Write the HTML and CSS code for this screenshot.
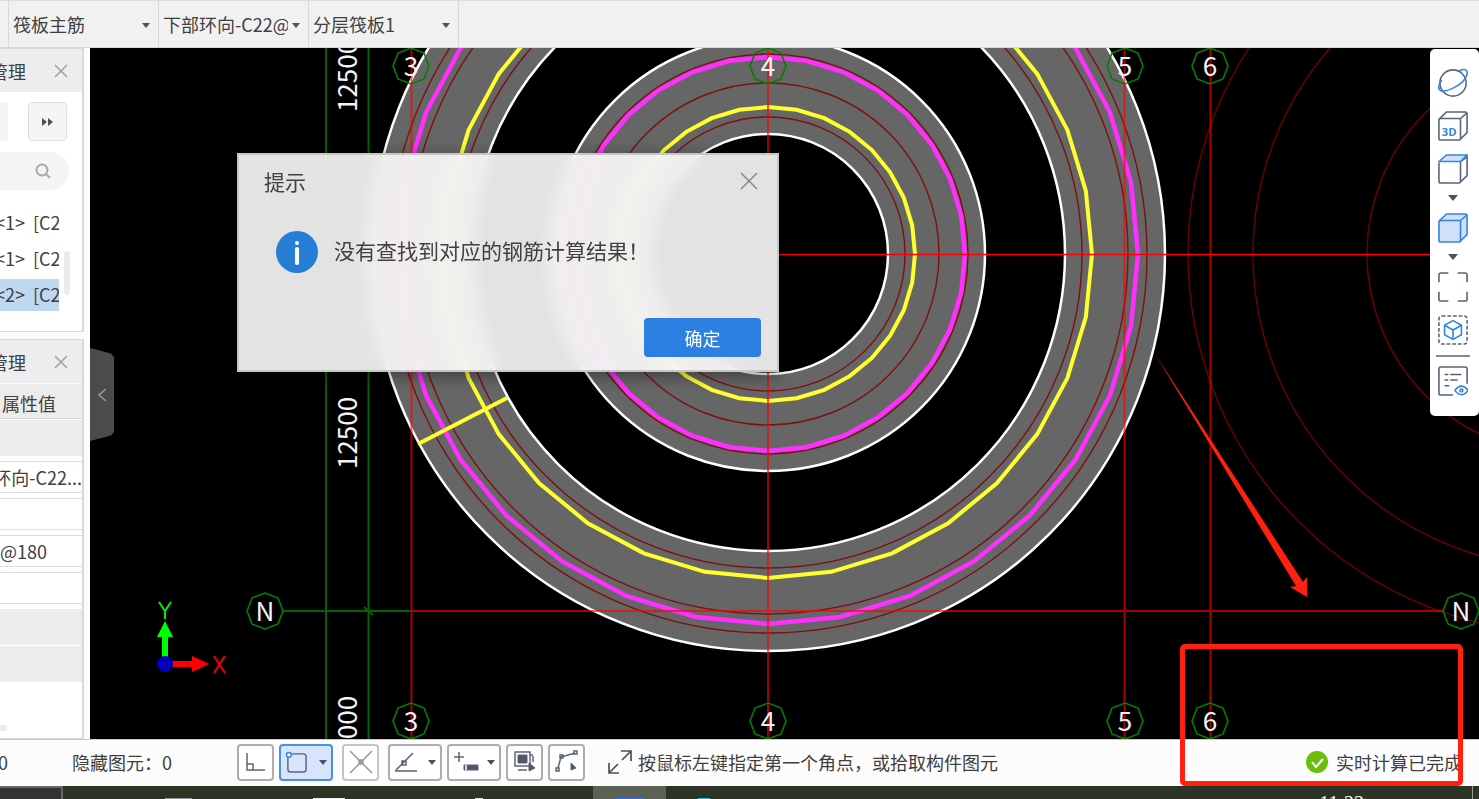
FILE: index.html
```html
<!DOCTYPE html>
<html lang="zh-CN">
<head>
    <meta charset="UTF-8">
    <meta name="viewport" content="width=device-width, initial-scale=1.0">
    <title>筏板主筋</title>
    <link rel="stylesheet" href="styles.css">
</head>
<body>
    <header class="topbar">
        <div class="picker-stub"></div>
        <div class="picker">
            <select aria-label="构件类型"><option>筏板主筋</option></select>
        </div>
        <div class="picker">
            <select aria-label="构件"><option>下部环向-C22@</option></select>
        </div>
        <div class="picker">
            <select aria-label="分层"><option>分层筏板1</option></select>
        </div>
    </header>

    <main class="workspace">
        <aside class="sidebar">
            <section class="panel">
                <div class="panel-head">
                    <span>管理</span>
                    <button class="close" aria-label="关闭"><svg width="14" height="14" viewBox="0 0 14 14"><path d="M1 1l12 12M13 1L1 13"/></svg></button>
                </div>
                <div class="panel-tools">
                    <span class="tool-stub"></span>
                    <button class="more" aria-label="更多"><svg width="12" height="8" viewBox="0 0 12 8"><path d="M0 0l5 4-5 4zM6 0l5 4-5 4z"/></svg></button>
                </div>
                <div class="search">
                    <input type="text" aria-label="搜索">
                    <svg width="16" height="16" viewBox="0 0 16 16"><circle cx="7" cy="7" r="5.5"/><path d="M11 11l4 4"/></svg>
                </div>
                <div class="tree">
                    <ul>
                        <li>&lt;1&gt;&nbsp; [C2</li>
                        <li>&lt;1&gt;&nbsp; [C2</li>
                        <li class="selected">&lt;2&gt;&nbsp; [C2</li>
                    </ul>
                    <span class="tree-scroll"></span>
                </div>
            </section>
            <section class="panel props">
                <div class="panel-head">
                    <span>管理</span>
                    <button class="close" aria-label="关闭"><svg width="14" height="14" viewBox="0 0 14 14"><path d="M1 1l12 12M13 1L1 13"/></svg></button>
                </div>
                <div class="prop-group name">属性值</div>
                <div class="prop-group"></div>
                <div class="prop long">环向-C22...</div>
                <div class="prop"></div>
                <div class="prop value">@180</div>
                <div class="prop"></div>
                <div class="prop-group"></div>
                <div class="prop-group"></div>
                <span class="props-scroll"></span>
            </section>
        </aside>

        <section class="canvas">
            <svg class="drawing" viewBox="90 48 1389 691" preserveAspectRatio="xMidYMid slice">
                <defs>
                    <!-- 32 段折线圆 -->
                    <polygon id="ring" vector-effect="non-scaling-stroke" points="1000,0 981,195 924,383 831,556 707,707 556,831 383,924 195,981 0,1000 -195,981 -383,924 -556,831 -707,707 -831,556 -924,383 -981,195 -1000,0 -981,-195 -924,-383 -831,-556 -707,-707 -556,-831 -383,-924 -195,-981 0,-1000 195,-981 383,-924 556,-831 707,-707 831,-556 924,-383 981,-195"/>
                    <polygon id="bubble" points="0,-18 13,-13 18,0 13,13 0,18 -13,13 -18,0 -13,-13"/>
                </defs>

                <!-- 筏板 -->
                <g transform="translate(768 254)">
                    <circle class="slab" r="347" stroke-width="100"/>
                    <circle class="slab" r="168" stroke-width="97"/>
                    <g class="edge">
                        <circle r="397"/><circle r="297"/><circle r="217"/><circle r="120"/>
                    </g>
                    <g class="guide">
                        <circle r="379"/><circle r="360"/><circle r="314"/>
                        <circle r="200"/><circle r="171"/><circle r="137"/>
                    </g>
                    <use class="bar-pink" href="#ring" transform="scale(.37)"/>
                    <use class="bar-yellow" href="#ring" transform="scale(.324)"/>
                    <use class="bar-pink" href="#ring" transform="scale(.197)"/>
                    <use class="bar-yellow" href="#ring" transform="scale(.147)"/>
                    <path class="bar-yellow" d="M-350 190L-261 144"/>
                </g>
                <g class="guide far" transform="translate(1567 254)">
                    <circle r="379"/><circle r="314"/><circle r="200"/>
                </g>

                <!-- 轴网 -->
                <path class="dim" d="M326 48V739M368.500 48V739M283 611H411M364 607l9 8"/>
                <path class="axis" d="M411.500 48V739M768 48V739M1124.500 48V739M1210.500 48V739M411 611H1444"/>
                <path class="axis bright" d="M768 254.500H1479"/>
                <g class="marks">
                    <use href="#bubble" x="411" y="66"/><use href="#bubble" x="768" y="66"/>
                    <use href="#bubble" x="1125" y="66"/><use href="#bubble" x="1210" y="66"/>
                    <use href="#bubble" x="411" y="721"/><use href="#bubble" x="768" y="721"/>
                    <use href="#bubble" x="1125" y="721"/><use href="#bubble" x="1210" y="721"/>
                    <use href="#bubble" x="265" y="611"/><use href="#bubble" x="1461" y="611"/>
                </g>
                <g class="labels">
                    <text x="411" y="76">3</text><text x="768" y="76">4</text>
                    <text x="1125" y="76">5</text><text x="1210" y="76">6</text>
                    <text x="411" y="731">3</text><text x="768" y="731">4</text>
                    <text x="1125" y="731">5</text><text x="1210" y="731">6</text>
                    <text x="265" y="621">N</text><text x="1461" y="621">N</text>
                    <text transform="translate(357 76) rotate(-90)">12500</text>
                    <text transform="translate(357 433) rotate(-90)">12500</text>
                    <text transform="translate(357 732) rotate(-90)">12000</text>
                </g>

                <!-- 坐标系 -->
                <path fill="#0f0" d="M162 657V637h-5l8-16 8 16h-5v20z"/>
                <path fill="#f00" d="M172 661h20v-5l17 8-17 8v-5h-20z"/>
                <circle cx="165" cy="664" r="8" fill="#00b"/>
                <path class="ucs-y" d="M159 602l6 9 6-9M165 611v8"/>
                <path class="ucs-x" d="M214 656l11 17M225 656l-11 17"/>

                <path fill="#ff2010" d="M1155 354L1303 582l4-5v20l-17-10 6-1z"/>
            </svg>

            <button class="collapse" aria-label="收起"><svg width="9" height="14" viewBox="0 0 9 14"><path d="M8 1L1 7l7 6"/></svg></button>

            <nav class="viewbar">
                <button aria-label="动态观察"><svg class="ico" viewBox="0 0 32 32"><circle cx="16" cy="16" r="14"/><path class="blue" d="M23 3c6-3 9-1 8 4-2 7-9 12-16 15-7 3-13 4-14 0-1-3 1-6 3-9"/></svg></button>
                <button aria-label="三维"><svg class="ico" viewBox="0 0 32 32"><path d="M1 9v20q0 2 2 2h20l8-8V3q0-2-2-2H9zM1 8h22q1 0 1 1v22M24 8l7-6"/><text x="4" y="27">3D</text></svg></button>
                <button aria-label="俯视"><svg class="ico" viewBox="0 0 32 32"><path d="M1 9v20q0 2 2 2h20l8-8V3L24 8v22"/><path class="blue tint" d="M1 8L9 1h22l-7 7z"/></svg></button>
                <svg class="down" viewBox="0 0 10 8"><path d="M0 1h10L5 7z"/></svg>
                <button aria-label="实体"><svg class="ico" viewBox="0 0 32 32"><path class="blue tint" d="M1 9v20q0 2 2 2h20l8-8V3q0-2-2-2H9z"/><path class="blue" d="M1 8h22q1 0 1 1v22M24 8l7-6"/></svg></button>
                <svg class="down" viewBox="0 0 10 8"><path d="M0 1h10L5 7z"/></svg>
                <button aria-label="全屏"><svg class="ico" viewBox="0 0 32 32"><path d="M1 11V3q0-2 2-2h8M21 1h8q2 0 2 2v8M31 21v8q0 2-2 2h-8M11 31H3q-2 0-2-2v-8"/></svg></button>
                <button aria-label="局部三维"><svg class="ico" viewBox="0 0 32 32"><rect x="1" y="1" width="30" height="30" rx="3" stroke-dasharray="4 2"/><path class="blue" d="M16 6l9 5v10l-9 5-9-5V11zM7 11l9 5 9-5M16 16v10"/></svg></button>
                <hr>
                <button aria-label="显示设置"><svg class="ico" viewBox="0 0 32 32"><path d="M16 31H3q-2 0-2-2V3q0-2 2-2h26q2 0 2 2v16M7 9h4M13 9h12M7 15h4M13 15h8M7 21h5"/><path class="blue" d="M18 26q7-9 14 0-7 9-14 0z"/><circle class="blue" cx="25" cy="26" r="1.500"/></svg></button>
            </nav>
        </section>
    </main>

    <footer class="statusbar">
        <span class="count-left">0</span>
        <span class="hidden-count">隐藏图元：0</span>
        <div class="snap">
            <button aria-label="正交"><svg width="20" height="20" viewBox="0 0 20 20"><path d="M1 1v17h18M1 12h6v6"/></svg></button>
            <button class="wide active" aria-label="矩形"><svg width="23" height="23" viewBox="0 0 24 24"><rect x="3" y="3" width="19" height="19" rx="3"/><circle class="pin" cx="4" cy="4" r="2.500"/></svg><i></i></button>
        </div>
        <div class="snap">
            <button class="off" aria-label="交点"><svg width="24" height="24" viewBox="0 0 24 24"><path d="M1 1l22 22M23 1L1 23M10 10h4v4h-4z"/></svg></button>
        </div>
        <div class="snap">
            <button class="wide" aria-label="角度"><svg width="24" height="22" viewBox="0 0 24 22"><path d="M1 20h22M2 19L19 2M8 10h4v4H8z"/></svg><i></i></button>
            <button class="wide" aria-label="动态输入"><svg width="26" height="22" viewBox="0 0 26 22"><path d="M1 6h10M6 1v10"/><path class="solid" d="M11 14h14v5H11z"/><path class="cursor" d="M13 14v5"/></svg><i></i></button>
            <button aria-label="选择"><svg width="24" height="24" viewBox="0 0 24 24"><path d="M2 2h15v14H2zM5 20h9M20 6v6M17 5h3"/><path class="solid" d="M5 5h9v8H5zM16 13l6 5-6 3z"/></svg></button>
            <button aria-label="折线"><svg width="24" height="24" viewBox="0 0 24 24"><path d="M3 18L6 7l14-4M1 18h3v3H1zM5 5h3v3H5zM19 1h3v3h-3z"/><path class="solid" d="M16 13l5 5-5 2z"/></svg></button>
        </div>
        <svg class="tip-icon" width="24" height="24" viewBox="0 0 24 24"><path d="M14 10l9-9M13 1h10v10M10 14l-9 9M1 13v10h10"/></svg>
        <span class="tip">按鼠标左键指定第一个角点，或拾取构件图元</span>
        <svg class="done-icon" width="22" height="22" viewBox="0 0 22 22"><circle cx="11" cy="11" r="11"/><path d="M6 11l4 5 7-8"/></svg>
        <span class="done">实时计算已完成</span>
    </footer>

    <div class="taskbar">
        <span class="start"></span>
        <span class="app grey"></span>
        <span class="app white"></span>
        <span class="app dot"></span>
        <span class="app current"></span>
        <span class="app cyan"></span>
        <time class="clock">11:22</time>
        <span class="desktop"></span>
    </div>

    <div class="dialog" role="dialog" aria-labelledby="dialog-title">
        <div class="dialog-head">
            <h1 id="dialog-title">提示</h1>
            <button class="close" aria-label="关闭"><svg width="18" height="18" viewBox="0 0 18 18"><path d="M1 1l16 16M17 1L1 17"/></svg></button>
        </div>
        <div class="dialog-body">
            <svg width="42" height="42" viewBox="0 0 42 42"><circle cx="21" cy="21" r="21" fill="#267dd6"/><circle cx="21" cy="12" r="2" fill="#fff"/><path d="M21 18v14" stroke="#fff" stroke-width="4" stroke-linecap="round"/></svg>
            <p>没有查找到对应的钢筋计算结果！</p>
        </div>
        <button class="ok">确定</button>
    </div>

    <div class="highlight"></div>
</body>
</html>
```
FILE: styles.css
```css
* {
    box-sizing: border-box;
}
body {
    margin: 0;
    height: 100vh;
    display: flex;
    flex-direction: column;
    position: relative;
    overflow: hidden;
    background: #fcfcfc;
    color: #404040;
    font-family: "Noto Sans CJK SC", sans-serif;
    font-size: 18px;
    line-height: 24px;
}
button {
    padding: 0;
    border: 0;
    background: none;
    font: inherit;
    color: inherit;
}
svg {
    display: block;
    flex: none;
}

/* 顶部工具栏 */
.topbar {
    display: flex;
    flex: none;
    height: 48px;
    background: #f1f1f1;
    border-top: 1px solid #dcdcdc;
    border-bottom: 1px solid #d8d8d8;
}
.picker-stub {
    width: 9px;
    border-right: 1px solid #d8d8d8;
}
.picker {
    width: 150px;
    position: relative;
    border-right: 1px solid #d8d8d8;
}
.picker select {
    width: 100%;
    height: 100%;
    padding: 0 20px 0 4px;
    border: 0;
    appearance: none;
    background: none;
    font: inherit;
    color: inherit;
}
.picker::after {
    content: "";
    position: absolute;
    right: 8px;
    top: 22px;
    border: 4px solid transparent;
    border-top: 5px solid #4a5262;
    border-bottom: 0;
}

.workspace {
    flex: 1;
    display: flex;
    min-height: 0;
}

/* 左侧面板 */
.sidebar {
    width: 84px;
    margin-right: 6px;
    flex: none;
    display: flex;
    flex-direction: column;
    gap: 7px;
    overflow: hidden;
}
.panel {
    border: solid #d8d8d8;
    border-width: 1px 2px 1px 0;
    background: #fff;
}
.panel-head {
    display: flex;
    justify-content: flex-end;
    align-items: center;
    gap: 28px;
    height: 43px;
    padding-right: 14px;
    background: #ededef;
}
.panel-head span {
    flex: none;
}
.close svg {
    fill: none;
    stroke: #a0a0a0;
    stroke-width: 1.5;
}
.panel-tools {
    display: flex;
    justify-content: space-between;
    padding: 10px 15px 0 0;
}
.tool-stub {
    width: 8px;
    border-radius: 0 4px 4px 0;
    background: #f4f4f4;
}
.more {
    width: 39px;
    height: 39px;
    display: flex;
    align-items: center;
    justify-content: center;
    border: 1px solid #dde0e2;
    border-radius: 4px;
    background: #f5f5f5;
    fill: #4a5262;
}
.search {
    display: flex;
    align-items: center;
    width: 69px;
    height: 38px;
    margin-top: 11px;
    padding-right: 18px;
    border-radius: 0 19px 19px 0;
    background: #f4f4f4;
}
.search input {
    flex: 1;
    min-width: 0;
    border: 0;
    background: none;
}
.search svg {
    fill: none;
    stroke: #a8a8a8;
    stroke-width: 2;
}
.tree {
    display: flex;
    justify-content: space-between;
    height: 141px;
    padding: 17px 12px 0 0;
}
.tree ul {
    width: 59px;
    margin: 0;
    padding: 0;
    list-style: none;
}
.tree li {
    height: 32px;
    margin-bottom: 4px;
    line-height: 30px;
    overflow: hidden;
    white-space: nowrap;
    text-indent: -5px;
}
.tree .selected {
    background: #bfd8f2;
}
.tree-scroll {
    width: 6px;
    height: 44px;
    margin-top: 44px;
    border-radius: 3px;
    background: #ebebeb;
}
.props {
    flex: 1;
}
.prop-group {
    height: 36px;
    margin-bottom: 1px;
    background: #ececec;
}
.prop-group.name {
    padding-left: 2px;
    border-top: 1px solid #fafafa;
    border-bottom: 1px solid #d8d8d8;
    line-height: 38px;
}
.prop {
    display: flex;
    align-items: center;
    height: 32px;
    margin: 5px 0;
    border: solid #dedede;
    border-width: 1px 0;
    white-space: nowrap;
}
.prop.long {
    justify-content: flex-end;
}
.prop.value {
    justify-content: flex-end;
    padding-right: 35px;
}
.props-scroll {
    display: block;
    width: 7px;
    height: 6px;
    margin-top: 43px;
    border-radius: 0 3px 3px 0;
    background: #ebebeb;
}

/* 绘图区 */
.canvas {
    flex: 1;
    position: relative;
    min-width: 0;
    background: #000;
}
.drawing {
    width: 100%;
    height: 100%;
    fill: none;
}
.slab {
    stroke: #666;
}
.edge {
    stroke: #fff;
    stroke-width: 2.5;
}
.guide {
    stroke: #7d1010;
    stroke-width: 1.4;
}
.guide.far {
    stroke: #6c0000;
}
.bar-pink {
    stroke: #ff30ff;
    stroke-width: 4.5;
}
.bar-yellow {
    stroke: #ffff30;
    stroke-width: 4;
}
.dim {
    stroke: #006400;
    stroke-width: 2;
}
.axis {
    stroke: #f00;
    stroke-width: 2;
    opacity: .65;
}
.axis.bright {
    stroke-width: 1.6;
    opacity: 1;
}
.marks {
    stroke: #008000;
    stroke-width: 1.6;
}
.labels {
    fill: #f4f4f4;
    font-size: 26px;
    text-anchor: middle;
}
.ucs-x {
    stroke: #e00;
    stroke-width: 2;
}
.ucs-y {
    stroke: #0e0;
    stroke-width: 2;
}
.collapse {
    position: absolute;
    left: 0;
    top: 300px;
    width: 24px;
    height: 93px;
    display: flex;
    align-items: center;
    justify-content: center;
    background: #4b4b4b;
    clip-path: polygon(0 0, 88% 6%, 100% 10%, 100% 90%, 88% 94%, 0 100%);
}
.collapse svg {
    fill: none;
    stroke: #999;
    stroke-width: 1.5;
}

/* 视图工具栏 */
.viewbar {
    position: absolute;
    top: 1px;
    right: 0;
    width: 49px;
    padding: 19px 3px 20px 0;
    display: flex;
    flex-direction: column;
    align-items: center;
    gap: 13px;
    border-radius: 5px;
    background: #fff;
}
.viewbar hr {
    width: 34px;
    height: 2px;
    margin: -3px 0 -4px;
    border: 0;
    background: #8a8a8e;
}
.ico {
    width: 30px;
    height: 30px;
    fill: none;
    stroke: #5b6478;
    stroke-width: 1.7;
}
.ico .blue {
    stroke: #3584e4;
}
.ico .tint {
    fill: #cfe0f8;
}
.ico text {
    fill: #3584e4;
    stroke: none;
    font-family: "Open Sans", sans-serif;
    font-size: 12px;
    font-weight: 700;
}
.down {
    width: 10px;
    height: 8px;
    margin: -3px 0 -2px;
    fill: #4a5262;
}

/* 状态栏 */
.statusbar {
    flex: none;
    display: flex;
    align-items: center;
    height: 47px;
    padding: 0 17px 2px 0;
    border-top: 1px solid #c8c8c8;
    white-space: nowrap;
}
.count-left {
    width: 72px;
    text-indent: -2px;
}
.hidden-count {
    width: 165px;
}
.snap {
    display: flex;
    gap: 5px;
    margin-right: 9px;
}
.snap button {
    width: 37px;
    height: 37px;
    display: flex;
    align-items: center;
    justify-content: center;
    border: 2px solid #adadad;
    border-radius: 4px;
    background: #fff;
}
.snap .wide {
    width: 54px;
    justify-content: space-between;
    padding: 0 4px;
}
.snap .active {
    border-color: #4a90e8;
    background: #d6e5fb;
}
.snap .off {
    border-color: #c4c4c4;
}
.snap i {
    border: 4px solid transparent;
    border-top: 5px solid #4a5262;
    border-bottom: 0;
}
.snap svg {
    fill: none;
    stroke: #5b6478;
    stroke-width: 1.5;
}
.snap .off svg {
    stroke: #999;
}
.snap .pin {
    fill: #fff;
    stroke: #3584e4;
}
.snap .solid {
    fill: #4f586b;
    stroke-width: 1;
}
.snap .cursor {
    stroke: #fff;
}
.tip-icon {
    margin: 0 6px 0 14px;
    fill: none;
    stroke: #505050;
    stroke-width: 1.7;
}
.done-icon {
    margin: 0 8px 0 auto;
    fill: #6cbd0c;
}
.done-icon path {
    fill: none;
    stroke: #fff;
    stroke-width: 2;
}

/* 任务栏 */
.taskbar {
    flex: none;
    display: flex;
    align-items: flex-end;
    height: 13px;
    overflow: hidden;
    background: #2d3325;
}
.start {
    width: 63px;
    height: 13px;
    border: solid #686868;
    border-width: 2px 2px 0 0;
    background: #333;
}
.app {
    height: 1px;
}
.grey {
    width: 27px;
    margin-left: 102px;
    background: #999;
}
.white {
    width: 32px;
    margin-left: 121px;
    background: #eee;
}
.dot {
    width: 8px;
    margin-left: 130px;
    background: #ddd;
}
.current {
    width: 73px;
    height: 13px;
    margin-left: 110px;
    background: linear-gradient(#2b6df0, #2b6df0) center bottom / 29px 1px no-repeat #5b6155;
}
.cyan {
    width: 12px;
    margin-left: 32px;
    background: #20c0d0;
}
.clock {
    align-self: flex-start;
    margin: 5px 108px 0 auto;
    color: #fff;
    font-family: "Liberation Serif", serif;
    font-size: 20px;
}
.desktop {
    width: 7px;
    height: 13px;
    border-left: 1px solid #999;
}

/* 提示框 */
.dialog {
    position: absolute;
    left: 237px;
    top: 153px;
    width: 542px;
    padding: 10px 16px 13px 25px;
    border: 2px solid #c6c6c6;
    background: rgba(255, 255, 255, .89);
    backdrop-filter: blur(8px);
    box-shadow: 0 4px 16px rgba(0, 0, 0, .4);
}
.dialog-head {
    display: flex;
    justify-content: space-between;
    align-items: center;
    height: 32px;
    padding-right: 3px;
}
.dialog-head h1 {
    margin: 0;
    font-size: 21px;
    font-weight: 400;
}
.dialog-head .close svg {
    stroke: #888;
}
.dialog-body {
    display: flex;
    align-items: center;
    gap: 16px;
    height: 42px;
    margin: 34px 0 45px 12px;
}
.dialog-body p {
    margin: 0;
    padding-bottom: 4px;
    font-size: 21px;
}
.ok {
    display: block;
    width: 117px;
    height: 39px;
    margin-left: auto;
    border-radius: 4px;
    background: #2c80e2;
    color: #fff;
}

.highlight {
    position: absolute;
    right: 16px;
    bottom: 13px;
    width: 283px;
    height: 142px;
    border: 5px solid #ff2010;
    border-radius: 5px;
    pointer-events: none;
}
```
